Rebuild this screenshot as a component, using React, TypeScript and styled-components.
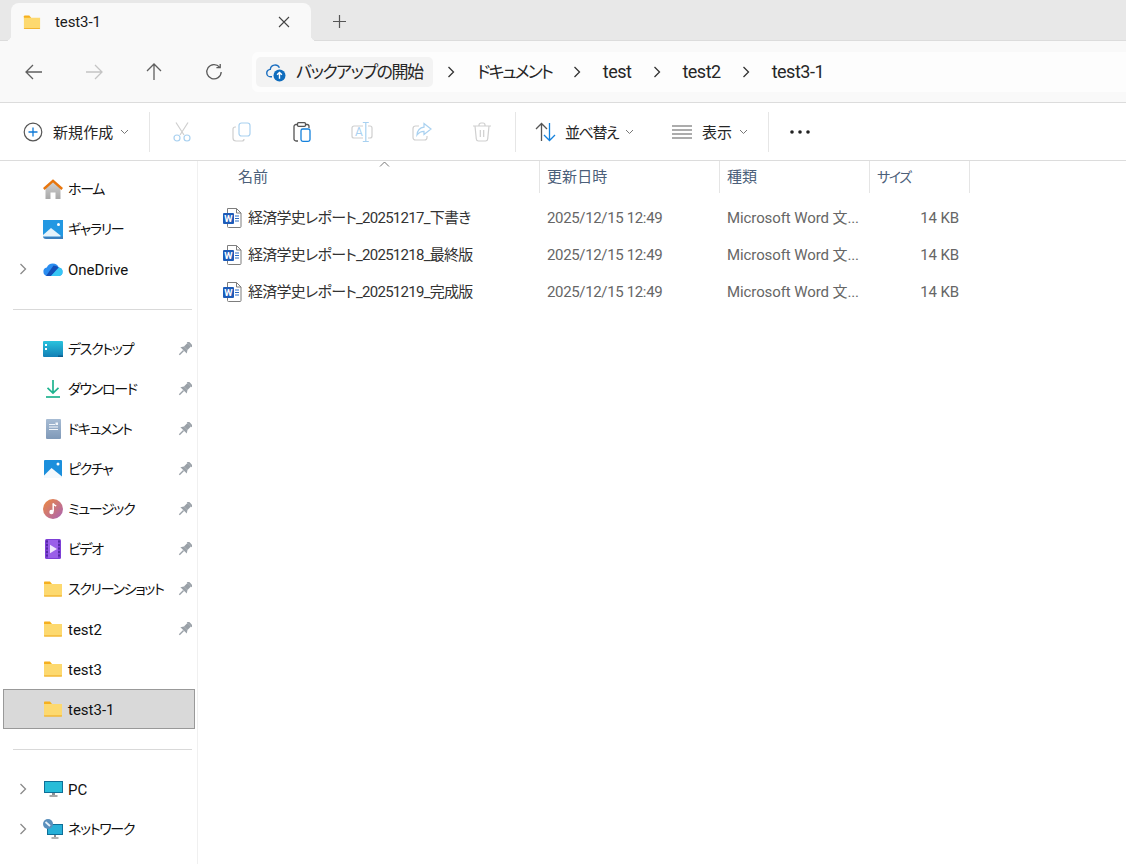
import React from 'react';
import styled, { createGlobalStyle } from 'styled-components';

const GlobalStyle = createGlobalStyle`
html, body {
    margin: 0;
    height: 100%;
    background: #fff;
}
body {
    font-family: Roboto, "Noto Sans CJK JP", sans-serif;
    font-size: 15px;
    line-height: 20px;
    font-feature-settings: "palt";
    color: #1b1b1b;
    overflow: hidden;
}
svg {
    flex: none;
}
`;

const hasKana = (text: string) => /[ァ-ヶ]/.test(text);

const Window = styled.div`
height: 864px;
display: flex;
flex-direction: column;
`;

/* tab strip */
const TabStrip = styled.div`
height: 41px;
flex: none;
box-sizing: border-box;
padding: 3px 0 0 11px;
display: flex;
background: #e8e8e8;
border-bottom: 1px solid #dcdcdc;
`;

const Tab = styled.div`
position: relative;
width: 300px;
height: 38px;
box-sizing: border-box;
padding: 0 21px 0 12px;
display: flex;
align-items: center;
gap: 14px;
background: #f9f9f9;
border-radius: 8px 8px 0 0;

&::before, &::after {
    content: '';
    position: absolute;
    bottom: 0;
    width: 6px;
    height: 6px;
}
&::before {
    left: -6px;
    background: radial-gradient(circle at 0 0, transparent 6px, #f9f9f9 6.5px);
}
&::after {
    right: -6px;
    background: radial-gradient(circle at 100% 0, transparent 6px, #f9f9f9 6.5px);
}
`;

const TabTitle = styled.span`
flex: 1;
letter-spacing: -0.1px;
`;

const NewTab = styled.div`
width: 58px;
padding-right: 2px;
box-sizing: border-box;
display: flex;
align-items: center;
justify-content: center;
`;

/* nav bar */
const NavBar = styled.div`
height: 62px;
flex: none;
box-sizing: border-box;
padding: 10px 0 9px 4px;
display: flex;
align-items: center;
background: #f9f9f9;
border-bottom: 1px solid #dcdcdc;
`;

const NavButton = styled.div`
width: 60px;
display: flex;
justify-content: center;
`;

const AddressBar = styled.div`
flex: 1;
height: 40px;
margin-left: 8px;
padding-left: 4px;
display: flex;
align-items: center;
background: #fdfdfd;
border-radius: 6px 0 0 6px;
font-size: 18px;
`;

const BackupChip = styled.div`
width: 177px;
height: 30px;
box-sizing: border-box;
padding-left: 10px;
display: flex;
align-items: center;
gap: 10px;
background: #f3f3f3;
border-radius: 5px;
color: #262626;
font-size: 17px;
letter-spacing: -1.5px;
white-space: nowrap;
`;

const CrumbArrow = styled.div`
width: 10px;
margin: 0 20.5px;
display: flex;
justify-content: center;

${BackupChip} + & {
    margin: 0 21px 0 13px;
}
`;

const Crumb = styled.span<{ $kana: boolean }>`
color: #262626;
font-size: ${(p) => (p.$kana ? 17 : 18)}px;
letter-spacing: ${(p) => (p.$kana ? -2 : -0.5)}px;
`;

/* command bar */
const CommandBar = styled.div`
height: 58px;
flex: none;
box-sizing: border-box;
padding-left: 11px;
display: flex;
align-items: center;
background: #fff;
border-bottom: 1px solid #dcdcdc;
`;

const CommandButton = styled.div<{ $width: number; $pad: number }>`
width: ${(p) => p.$width}px;
box-sizing: border-box;
padding-left: ${(p) => p.$pad}px;
display: flex;
align-items: center;
gap: 10px;
color: #262626;
white-space: nowrap;
`;

const CommandLabel = styled.span<{ $tight?: boolean }>`
margin: 0 -3px 0 ${(p) => (p.$tight ? -1 : 0)}px;
padding-top: 2px;
letter-spacing: ${(p) => (p.$tight ? -1.4 : 0.1)}px;
`;

const CommandDivider = styled.div<{ $left: number; $right: number }>`
width: 1px;
height: 40px;
margin: 0 ${(p) => p.$right}px 0 ${(p) => p.$left}px;
background: #e6e6e6;
`;

const IconSlot = styled.div`
width: 60px;
display: flex;
justify-content: center;
`;

/* body */
const Main = styled.div`
flex: 1;
display: flex;
min-height: 0;
`;

const Sidebar = styled.nav`
width: 198px;
flex: none;
box-sizing: border-box;
padding: 8px 2px 0 3px;
border-right: 1px solid #f0f0f0;
`;

const NavRow = styled.div<{ $selected?: boolean }>`
height: 40px;
box-sizing: border-box;
display: grid;
grid-template-columns: 37px 24px 1fr 18px;
align-items: center;
border: 1px solid ${(p) => (p.$selected ? '#999' : 'transparent')};
background: ${(p) => (p.$selected ? '#d9d9d9' : 'transparent')};
color: #111;
`;

const NavCell = styled.div`
display: flex;
align-items: center;
justify-content: center;
`;

const NavLabel = styled.span<{ $kana: boolean }>`
padding: ${(p) => (p.$kana ? 0 : 2)}px 0 0 3px;
font-size: ${(p) => (p.$kana ? 14 : 15)}px;
letter-spacing: ${(p) => (p.$kana ? -1.3 : 0)}px;
white-space: nowrap;
`;

const NavSeparator = styled.div`
height: 40px;
display: flex;
align-items: center;
padding: 0 3px 0 10px;

&::after {
    content: '';
    flex: 1;
    height: 1px;
    background: #d9d9d9;
}
`;

const Content = styled.section`
flex: 1;
position: relative;
min-width: 0;
`;

const SortCaret = styled.div`
position: absolute;
left: 181px;
top: 0;
line-height: 0;
`;

const COLUMNS = '342px 180px 150px 100px';

const HeaderRow = styled.div`
height: 32px;
display: grid;
grid-template-columns: ${COLUMNS};
`;

const HeaderCell = styled.div<{ $first?: boolean; $kana?: boolean }>`
padding-left: ${(p) => (p.$first ? 40 : 7)}px;
display: flex;
align-items: center;
border-right: 1px solid #e5e5e5;
color: #4c607a;
font-size: ${(p) => (p.$kana ? 14 : 15)}px;
letter-spacing: ${(p) => (p.$kana ? -1.5 : 0.1)}px;
`;

const FileList = styled.div`
padding-top: 6px;
`;

const FileRow = styled.div`
height: 37px;
display: grid;
grid-template-columns: ${COLUMNS};
align-items: center;
`;

const NameCell = styled.div`
padding-left: 25px;
display: flex;
align-items: center;
gap: 6px;
color: #333;
white-space: nowrap;
letter-spacing: -0.74px;
`;

const InfoCell = styled.div<{ $right?: boolean }>`
padding: 0 11px 0 7px;
color: #666;
white-space: nowrap;
text-align: ${(p) => (p.$right ? 'right' : 'left')};
letter-spacing: -0.1px;
`;

const DateCell = styled(InfoCell)`
letter-spacing: -0.35px;
`;

/* icons */
const Folder = ({ size = 20 }: { size?: number }) => (
    <svg width={size} height={size * 0.8} viewBox="0 0 20 16">
        <path d="M1 1.5C1 .9 1.4.5 2 .5h5l2 2.5v1H1z" fill="#f6b01e" />
        <path d="M1 3h18v11.5c0 .5-.4 1-1 1H2c-.6 0-1-.5-1-1z" fill="#fdd96f" />
        <path d="M1 14.6h18v.3c0 .4-.4.6-.8.6H1.8c-.4 0-.8-.2-.8-.6z" fill="#eea81d" />
    </svg>
);

const Arrow = ({ dir, color = '#5f5f5f' }: { dir: 'left' | 'right' | 'up'; color?: string }) => {
    const rot = { left: 0, right: 180, up: 90 }[dir];
    return (
        <svg width="18" height="18" viewBox="0 0 18 18" style={{ transform: `rotate(${rot}deg)` }}>
            <path d="M1 9h16M8 2 1 9l7 7" fill="none" stroke={color} strokeWidth="1.3" />
        </svg>
    );
};

const Refresh = () => (
    <svg width="18" height="18" viewBox="0 0 18 18" fill="none" stroke="#5a5a5a" strokeWidth="1.3">
        <path d="M14.6 4.2A7.2 7.2 0 1 0 16.2 9" />
        <path d="M15.2 .9v3.8h-3.8" />
    </svg>
);

const Chevron = ({ color = '#4a4a4a', size = 10 }: { color?: string; size?: number }) => (
    <svg width={size} height={size * 1.2} viewBox="0 0 10 12">
        <path d="M2.5 1 7.5 6l-5 5" fill="none" stroke={color} strokeWidth="1.3" />
    </svg>
);

const SmallDown = () => (
    <svg width="9" height="6" viewBox="0 0 9 6">
        <path d="M1 1l3.5 3.5L8 1" fill="none" stroke="#777" strokeWidth="1" />
    </svg>
);

const Close = () => (
    <svg width="12" height="12" viewBox="0 0 12 12">
        <path d="M1 1l10 10M11 1 1 11" stroke="#444" strokeWidth="1.1" />
    </svg>
);

const Plus = () => (
    <svg width="13" height="13" viewBox="0 0 13 13">
        <path d="M6.5 0v13M0 6.5h13" stroke="#555" strokeWidth="1.2" />
    </svg>
);

const CloudBackup = () => (
    <svg width="20" height="20" viewBox="0 0 20 20">
        <path d="M6 14.800H4.600a3.700 3.700 0 0 1-.3-7.400A4.800 4.800 0 0 1 13.400 5.800" fill="none" stroke="#1c6fc0" strokeWidth="1.4" />
        <circle cx="13.500" cy="13.500" r="6" fill="#0f6cbd" />
        <path d="M13.500 16.700v-6M11.100 12.800l2.400-2.400 2.400 2.400" fill="none" stroke="#fff" strokeWidth="1.4" />
    </svg>
);

const NewIcon = () => (
    <svg width="20" height="20" viewBox="0 0 20 20">
        <circle cx="10" cy="10" r="8.800" fill="none" stroke="#555" strokeWidth="1.2" />
        <path d="M10 5.500v9M5.500 10h9" stroke="#0f7ad8" strokeWidth="1.3" />
    </svg>
);

const CutIcon = () => (
    <svg width="20" height="20" viewBox="0 0 20 20" fill="none" strokeWidth="1.2">
        <path d="M4 .5l8 12.500M16 .5 8 13" stroke="#cfcfcf" />
        <circle cx="5" cy="16" r="3" stroke="#a9d1f0" />
        <circle cx="15" cy="16" r="3" stroke="#a9d1f0" />
    </svg>
);

const CopyIcon = () => (
    <svg width="20" height="20" viewBox="0 0 20 20" fill="none" strokeWidth="1.2">
        <path d="M4 5H3a2 2 0 0 0-2 2v9a3 3 0 0 0 3 3h6a2 2 0 0 0 2-2" stroke="#cfcfcf" />
        <rect x="7" y="1" width="11" height="13" rx="2.500" stroke="#a9d1f0" />
    </svg>
);

const PasteIcon = () => (
    <svg width="20" height="20" viewBox="0 0 20 20" fill="none" strokeWidth="1.3">
        <path d="M6 19H4a2 2 0 0 1-2-2V4.500a2 2 0 0 1 2-2h2M13 2.500h2a2 2 0 0 1 2 2V6" stroke="#555" />
        <rect x="5.500" y=".7" width="8" height="3.600" rx="1" stroke="#555" />
        <rect x="9" y="7" width="9" height="12.300" rx="1.800" stroke="#1481dc" />
    </svg>
);

const RenameIcon = () => (
    <svg width="22" height="22" viewBox="0 0 22 22" fill="none" strokeWidth="1.2">
        <path d="M12 5H3a2 2 0 0 0-2 2v8a2 2 0 0 0 2 2h9M17 5h2a2 2 0 0 1 2 2v8a2 2 0 0 1-2 2h-2" stroke="#cfcfcf" />
        <path d="M11.800 1.500h6M14.800 1.500v19M11.800 20.500h6" stroke="#a9d1f0" />
        <text x="4" y="15" fontFamily="Roboto, sans-serif" fontSize="12" fill="#a9d1f0" stroke="none">A</text>
    </svg>
);

const ShareIcon = () => (
    <svg width="20" height="20" viewBox="0 0 20 20" fill="none" strokeWidth="1.2">
        <path d="M7 4H3.500A2.500 2.500 0 0 0 1 6.500v9A2.500 2.500 0 0 0 3.500 18h9a2.500 2.500 0 0 0 2.500-2.500V14" stroke="#cfcfcf" />
        <path d="M12 1.500 19 7l-7 5.500V9.300C9 9.300 6.800 10.500 5 13c.4-4.500 3-7.300 7-7.800z" stroke="#a9d1f0" />
    </svg>
);

const TrashIcon = () => (
    <svg width="20" height="20" viewBox="0 0 20 20" fill="none" stroke="#cfcfcf" strokeWidth="1.2">
        <path d="M1 4h18M7 4V3a2 2 0 0 1 2-2h2a2 2 0 0 1 2 2v1" />
        <path d="M3 4l1.300 13a2.200 2.200 0 0 0 2.200 2h7a2.200 2.200 0 0 0 2.200-2L17 4" />
        <path d="M8.300 8v7M11.700 8v7" />
    </svg>
);

const SortIcon = () => (
    <svg width="21" height="20" viewBox="0 0 21 20" fill="none" strokeWidth="1.3">
        <path d="M6.500 19V1.500M1 7l5.500-5.500L12 7" stroke="#555" />
        <path d="M14.500 1v17.500M9 13l5.500 5.500L20 13" stroke="#1481dc" />
    </svg>
);

const ViewIcon = () => (
    <svg width="20" height="14" viewBox="0 0 20 14" stroke="#5a5a5a" strokeWidth="1.2">
        <path d="M0 1h20M0 5h20M0 9h20M0 13h20" />
    </svg>
);

const MoreIcon = () => (
    <svg width="20" height="4" viewBox="0 0 20 4" fill="#222">
        <circle cx="2" cy="2" r="1.800" />
        <circle cx="10" cy="2" r="1.800" />
        <circle cx="18" cy="2" r="1.800" />
    </svg>
);

const HomeIcon = () => (
    <svg width="20" height="20" viewBox="0 0 20 20">
        <defs>
            <linearGradient id="home" x1="0" y1="0" x2="0" y2="1">
                <stop offset="0" stopColor="#d4d4d4" />
                <stop offset="1" stopColor="#a8a8a8" />
            </linearGradient>
        </defs>
        <path d="M2.500 8.500 10 2l7.500 6.500V20h-5v-6.500h-5V20h-5z" fill="url(#home)" />
        <path d="M.8 10 10 1.800 19.200 10" fill="none" stroke="#e8760e" strokeWidth="2.400" />
    </svg>
);

const GalleryIcon = () => (
    <svg width="20" height="20" viewBox="0 0 20 20">
        <path d="M0 1h20v19H3a3 3 0 0 1-3-3z" fill="#3a7fbe" />
        <rect y="1" width="20" height="16.500" fill="#2398e2" />
        <circle cx="15.500" cy="5.500" r="1.500" fill="#fff" />
        <path d="M0 16 8 9l9.500 7.500v1H0z" fill="#e6f3fb" />
    </svg>
);

const OneDriveIcon = () => (
    <svg width="20" height="14" viewBox="0 0 20 14">
        <path d="M4.500 14A4.300 4.300 0 0 1 3.800 5.500 6.500 6.500 0 0 1 15.800 5.500 4.300 4.300 0 0 1 16 14z" fill="#2a8df0" />
        <path d="M3 14 10.500 3.500c1.500 0 3.500.8 5.300 2L8 14z" fill="#1450b8" />
        <path d="M8 14 15.800 5.500A4.300 4.300 0 0 1 16 14z" fill="#37c6f4" />
    </svg>
);

const DesktopIcon = () => (
    <svg width="20" height="16" viewBox="0 0 20 16">
        <defs>
            <linearGradient id="desk" x1="0" y1="0" x2="0" y2="1">
                <stop offset="0" stopColor="#2ac3dd" />
                <stop offset="1" stopColor="#127fb5" />
            </linearGradient>
        </defs>
        <rect width="20" height="16" rx="1" fill="url(#desk)" />
        <rect x="2" y="3" width="2" height="2" fill="#fff" />
        <rect x="2" y="7" width="2" height="2" fill="#fff" />
        <rect x="15" y="14.500" width="5" height="1.500" fill="#0c5d8c" />
    </svg>
);

const DownloadIcon = () => (
    <svg width="16" height="18" viewBox="0 0 16 18" fill="none" stroke="#1fb38f" strokeWidth="1.700">
        <path d="M8 0v13M2.500 7.800 8 13l5.500-5.200" />
        <path d="M1 17h14" />
    </svg>
);

const DocumentIcon = () => (
    <svg width="15" height="20" viewBox="0 0 15 20">
        <defs>
            <linearGradient id="doc" x1="0" y1="0" x2="0" y2="1">
                <stop offset="0" stopColor="#a7bcd4" />
                <stop offset="1" stopColor="#7f99b8" />
            </linearGradient>
        </defs>
        <rect width="15" height="20" rx="1" fill="url(#doc)" />
        <path d="M3 5.500h6M3 8h9M3 10.500h9" stroke="#f2f6fa" strokeWidth="1" />
        <rect x="9.500" y="3.500" width="2.500" height="2.500" fill="#f2f6fa" />
    </svg>
);

const PictureIcon = () => (
    <svg width="18" height="18" viewBox="0 0 18 18">
        <rect width="18" height="18" rx="1" fill="#1b8fdc" />
        <circle cx="14" cy="4" r="1.500" fill="#fff" />
        <path d="M0 18V15.500L7.500 8 18 16.500V18z" fill="#f4f9fd" />
    </svg>
);

const MusicIcon = () => (
    <svg width="20" height="20" viewBox="0 0 20 20">
        <defs>
            <linearGradient id="mus" x1="0" y1="0" x2="1" y2="1">
                <stop offset="0" stopColor="#ef8a3c" />
                <stop offset="1" stopColor="#a862b8" />
            </linearGradient>
        </defs>
        <circle cx="10" cy="10" r="10" fill="url(#mus)" />
        <path d="M10.200 4.500v8" stroke="#fff" strokeWidth="1.500" />
        <path d="M10.200 4.500c.4 1.800 2.200 2 3 2.500" stroke="#fff" strokeWidth="1.500" fill="none" />
        <circle cx="8.500" cy="13" r="2.200" fill="#fff" />
    </svg>
);

const VideoIcon = () => (
    <svg width="16" height="20" viewBox="0 0 16 20">
        <rect width="16" height="20" rx="1.500" fill="#7d3fd6" />
        <rect x="3" y="1" width="10" height="18" fill="#9a5fe8" />
        <path d="M1.500 2.500h1M1.500 6h1M1.500 9.500h1M1.500 13h1M1.500 16.500h1M13.500 2.500h1M13.500 6h1M13.500 9.500h1M13.500 13h1M13.500 16.500h1" stroke="#2c1670" strokeWidth="1.800" />
        <path d="M5 5.800v8.400L12 10z" fill="#efe6fc" />
    </svg>
);

const PcIcon = () => (
    <svg width="19" height="16" viewBox="0 0 19 16">
        <rect width="19" height="12" fill="#0e6f98" />
        <rect x="1" y="1" width="17" height="10" fill="#27bcd8" />
        <path d="M8 12h3v2H8z" fill="#8a8f94" />
        <path d="M5.500 15h8" stroke="#777" strokeWidth="1.300" />
    </svg>
);

const NetworkIcon = () => (
    <svg width="20" height="20" viewBox="0 0 20 20">
        <rect x="4" y="5" width="16" height="11" fill="#0e6f98" />
        <rect x="5" y="6" width="14" height="9" fill="#27b0d8" />
        <path d="M11 16h2v2h-2z" fill="#8a8f94" />
        <path d="M8.500 19h7" stroke="#888" strokeWidth="1.300" />
        <circle cx="5" cy="5" r="5" fill="#5a8fbc" />
        <path d="M2.500 3 7 7" stroke="#e6f0f8" strokeWidth="1.800" />
    </svg>
);

const Pin = () => (
    <svg width="14" height="14" viewBox="0 0 14 14" fill="#9aa1a8">
        <g transform="rotate(45 7 7)">
            <rect x="3.500" y="-1" width="7" height="2" />
            <rect x="4.500" y="1" width="5" height="5" />
            <path d="M4.500 6h5l2 3h-9z" />
            <rect x="6.300" y="9" width="1.400" height="6" />
        </g>
    </svg>
);

const WordFile = () => (
    <svg width="19" height="20" viewBox="0 0 19 20">
        <path d="M4.500.5h9l4.500 4.500v13.500a1 1 0 0 1-1 1H5.500a1 1 0 0 1-1-1z" fill="#fff" stroke="#7d7d7d" />
        <path d="M13.500.5V5H18" fill="none" stroke="#7d7d7d" />
        <path d="M12 8h4M12 10.500h4M12 13h4" stroke="#2b6cc4" />
        <rect y="5" width="11" height="11" rx="1" fill="#1d5bb8" />
        <text x="5.500" y="14" textAnchor="middle" fontFamily="Roboto, sans-serif" fontWeight="700" fontSize="9.500" letterSpacing="0" fill="#fff">W</text>
    </svg>
);

type NavItem = { label: string; icon: React.ReactNode; arrow?: boolean; pin?: boolean; selected?: boolean };

const topItems: NavItem[] = [
    { label: 'ホーム', icon: <HomeIcon /> },
    { label: 'ギャラリー', icon: <GalleryIcon /> },
    { label: 'OneDrive', icon: <OneDriveIcon />, arrow: true },
];

const quickItems: NavItem[] = [
    { label: 'デスクトップ', icon: <DesktopIcon />, pin: true },
    { label: 'ダウンロード', icon: <DownloadIcon />, pin: true },
    { label: 'ドキュメント', icon: <DocumentIcon />, pin: true },
    { label: 'ピクチャ', icon: <PictureIcon />, pin: true },
    { label: 'ミュージック', icon: <MusicIcon />, pin: true },
    { label: 'ビデオ', icon: <VideoIcon />, pin: true },
    { label: 'スクリーンショット', icon: <Folder />, pin: true },
    { label: 'test2', icon: <Folder />, pin: true },
    { label: 'test3', icon: <Folder /> },
    { label: 'test3-1', icon: <Folder />, selected: true },
];

const bottomItems: NavItem[] = [
    { label: 'PC', icon: <PcIcon />, arrow: true },
    { label: 'ネットワーク', icon: <NetworkIcon />, arrow: true },
];

const files = [
    '経済学史レポート_20251217_下書き',
    '経済学史レポート_20251218_最終版',
    '経済学史レポート_20251219_完成版',
];

function NavRows({ items }: { items: NavItem[] }) {
    return (
        <>
            {items.map((item) => (
                <NavRow key={item.label} $selected={item.selected}>
                    <NavCell>{item.arrow && <Chevron color="#8a8a8a" />}</NavCell>
                    <NavCell>{item.icon}</NavCell>
                    <NavLabel $kana={hasKana(item.label)}>{item.label}</NavLabel>
                    <NavCell>{item.pin && <Pin />}</NavCell>
                </NavRow>
            ))}
        </>
    );
}

export default function App() {
    const crumbs = ['ドキュメント', 'test', 'test2', 'test3-1'];

    return (
        <Window>
            <GlobalStyle />
            <TabStrip>
                <Tab>
                    <Folder size={18} />
                    <TabTitle>test3-1</TabTitle>
                    <Close />
                </Tab>
                <NewTab>
                    <Plus />
                </NewTab>
            </TabStrip>

            <NavBar>
                <NavButton><Arrow dir="left" /></NavButton>
                <NavButton><Arrow dir="right" color="#c4c4c4" /></NavButton>
                <NavButton><Arrow dir="up" /></NavButton>
                <NavButton><Refresh /></NavButton>
                <AddressBar>
                    <BackupChip>
                        <CloudBackup />
                        バックアップの開始
                    </BackupChip>
                    {crumbs.map((crumb) => (
                        <React.Fragment key={crumb}>
                            <CrumbArrow><Chevron color="#333" /></CrumbArrow>
                            <Crumb $kana={hasKana(crumb)}>{crumb}</Crumb>
                        </React.Fragment>
                    ))}
                </AddressBar>
            </NavBar>

            <CommandBar>
                <CommandButton $width={130} $pad={12}>
                    <NewIcon />
                    <CommandLabel>新規作成</CommandLabel>
                    <SmallDown />
                </CommandButton>
                <CommandDivider $left={8} $right={2} />
                <IconSlot><CutIcon /></IconSlot>
                <IconSlot><CopyIcon /></IconSlot>
                <IconSlot><PasteIcon /></IconSlot>
                <IconSlot><RenameIcon /></IconSlot>
                <IconSlot><ShareIcon /></IconSlot>
                <IconSlot><TrashIcon /></IconSlot>
                <CommandDivider $left={3} $right={0} />
                <CommandButton $width={137} $pad={19}>
                    <SortIcon />
                    <CommandLabel $tight>並べ替え</CommandLabel>
                    <SmallDown />
                </CommandButton>
                <CommandButton $width={115} $pad={19}>
                    <ViewIcon />
                    <CommandLabel>表示</CommandLabel>
                    <SmallDown />
                </CommandButton>
                <CommandDivider $left={0} $right={21} />
                <MoreIcon />
            </CommandBar>

            <Main>
                <Sidebar>
                    <NavRows items={topItems} />
                    <NavSeparator />
                    <NavRows items={quickItems} />
                    <NavSeparator />
                    <NavRows items={bottomItems} />
                </Sidebar>
                <Content>
                    <SortCaret>
                        <svg width="11" height="6" viewBox="0 0 11 6">
                            <path d="M1 5.500 5.500 1 10 5.500" fill="none" stroke="#777" strokeWidth="1" />
                        </svg>
                    </SortCaret>
                    <HeaderRow>
                        <HeaderCell $first>名前</HeaderCell>
                        <HeaderCell>更新日時</HeaderCell>
                        <HeaderCell>種類</HeaderCell>
                        <HeaderCell $kana>サイズ</HeaderCell>
                    </HeaderRow>
                    <FileList>
                        {files.map((name) => (
                            <FileRow key={name}>
                                <NameCell>
                                    <WordFile />
                                    {name}
                                </NameCell>
                                <DateCell>2025/12/15 12:49</DateCell>
                                <InfoCell>Microsoft Word 文...</InfoCell>
                                <InfoCell $right>14 KB</InfoCell>
                            </FileRow>
                        ))}
                    </FileList>
                </Content>
            </Main>
        </Window>
    );
}
